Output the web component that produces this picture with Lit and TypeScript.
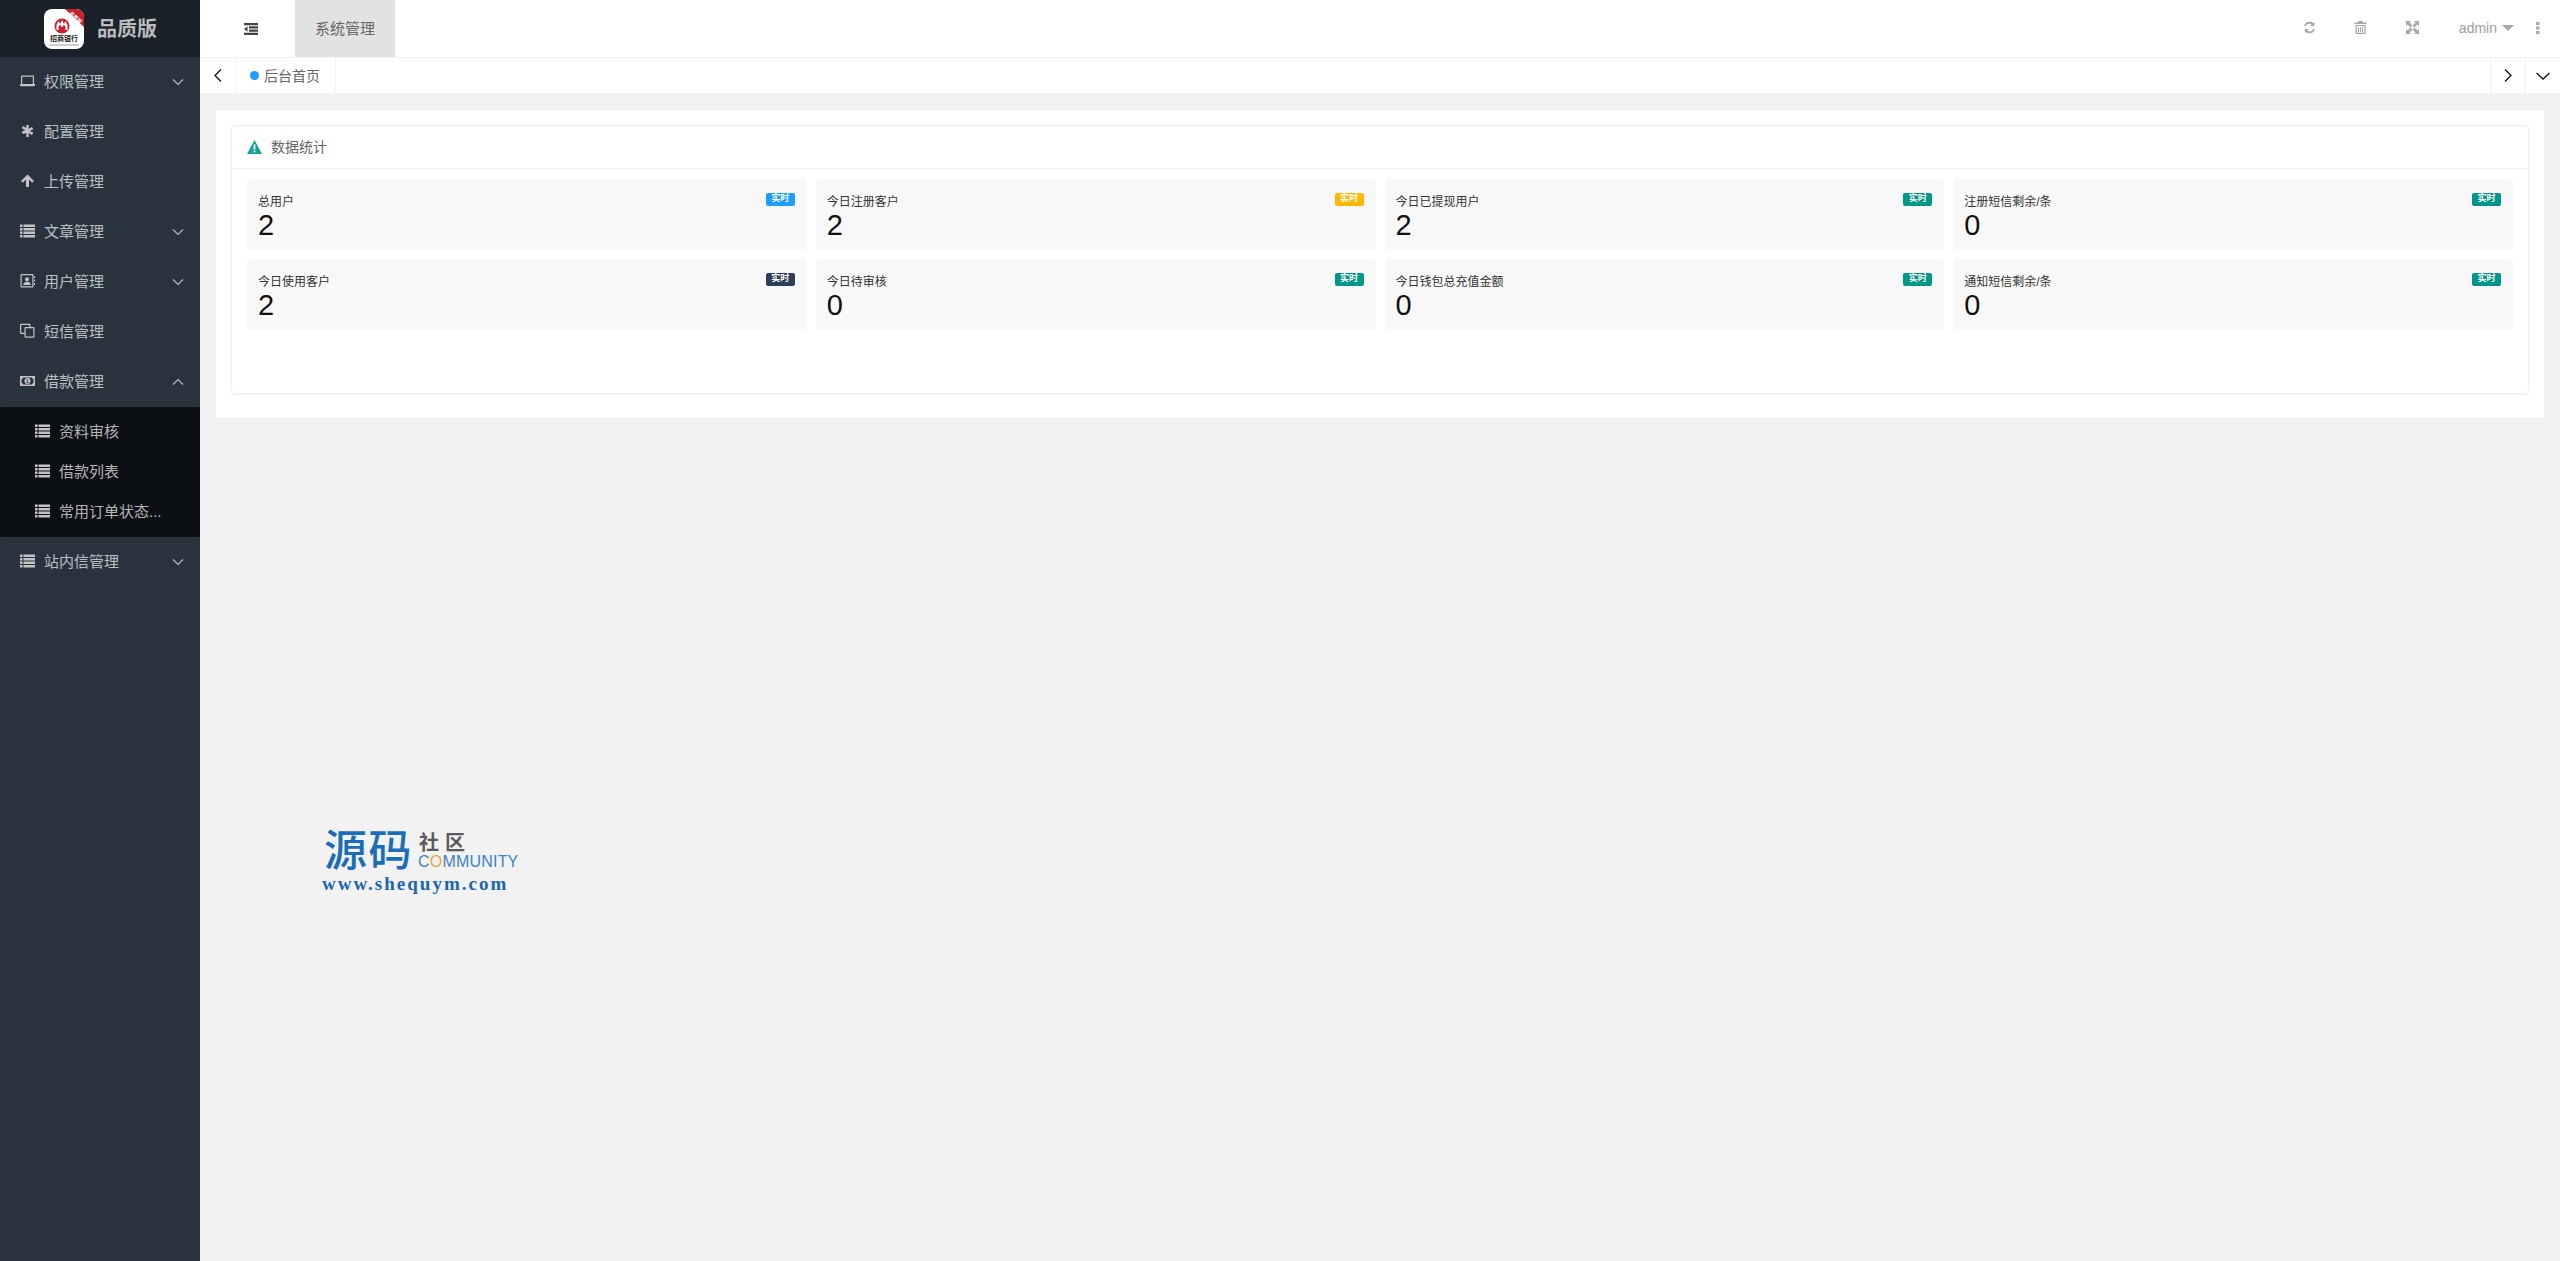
import { LitElement, html, css, svg } from "lit";
import { customElement } from "lit/decorators.js";

const listIcon = svg`<path d="M0 1.500h2.500v2.400H0zM3.500 1.500H15v2.400H3.500zM0 5h2.500v2.400H0zM3.500 5H15v2.400H3.500zM0 8.500h2.500v2.400H0zM3.500 8.500H15v2.400H3.500zM0 12h2.500v2.400H0zM3.500 12H15v2.400H3.500z"/>`;
const icons: Record<string, any> = {
  laptop: svg`<path fill-rule="evenodd" d="M2 2.500h11a1 1 0 0 1 1 1v7.500h1v1.500a.8.8 0 0 1-.8.8H.8a.8.8 0 0 1-.8-.8V11h1V3.500a1 1 0 0 1 1-1zM2.200 3.700V11h10.600V3.700z"/>`,
  asterisk: svg`<path d="M6.200 1.500h2.600l-.2 4 3.400-2.200 1.300 2.300-3.600 1.800 3.600 1.800-1.300 2.300-3.400-2.200.2 4H6.200l.2-4L3 10.500 1.700 8.200 5.300 6.400 1.700 4.600 3 2.300l3.400 2.200z" transform="translate(0 .6)"/>`,
  up: svg`<path d="M7.500 1.500 14 8l-1.700 1.700-3.300-3.300V14H6V6.400L2.700 9.700 1 8z"/>`,
  list: listIcon,
  book: svg`<path fill-rule="evenodd" d="M1.500 1h11a1 1 0 0 1 1 1v11.500a1 1 0 0 1-1 1h-11a1 1 0 0 1-1-1V2a1 1 0 0 1 1-1zM1.700 2.200v11.100h10.600V2.200zM7 4.200a2 2 0 1 1 0 4 2 2 0 0 1 0-4zM3.300 12c0-2 1.300-3.300 3.700-3.300s3.700 1.300 3.700 3.300zM14 3h1v2h-1zM14 6.500h1v2h-1zM14 10h1v2h-1z"/>`,
  clone: svg`<path fill-rule="evenodd" d="M1 .8h8.500a1 1 0 0 1 1 1V4h3a1 1 0 0 1 1 1v8.800a1 1 0 0 1-1 1H5.500a1 1 0 0 1-1-1V11H1a1 1 0 0 1-1-1V1.800a1 1 0 0 1 1-1zM1.200 2v7.800h3.300V5a1 1 0 0 1 1-1h3.800V2zM5.700 5.200v8.400h7.600V5.200z"/>`,
  money: svg`<path fill-rule="evenodd" d="M0 3h15v10H0zM2.800 4.500c0 1-.6 1.500-1.300 1.500v4c.8 0 1.300.6 1.300 1.500h9.400c0-.9.500-1.500 1.300-1.500V6c-.8 0-1.300-.5-1.300-1.500zM7.500 5a3 3 0 1 1 0 6 3 3 0 0 1 0-6zM6.700 6.500v.7h.5v2H6.600v.8h2v-.8H8V6.500z"/>`,
};

const menu = [
  { icon: "laptop", text: "权限管理", arrow: "down" },
  { icon: "asterisk", text: "配置管理" },
  { icon: "up", text: "上传管理" },
  { icon: "list", text: "文章管理", arrow: "down" },
  { icon: "book", text: "用户管理", arrow: "down" },
  { icon: "clone", text: "短信管理" },
  { icon: "money", text: "借款管理", arrow: "up", sub: ["资料审核", "借款列表", "常用订单状态..."] },
  { icon: "list", text: "站内信管理", arrow: "down" },
];

const stats = [
  ["总用户", "2", "blue"],
  ["今日注册客户", "2", "orange"],
  ["今日已提现用户", "2", "green"],
  ["注册短信剩余/条", "0", "green"],
  ["今日使用客户", "2", "navy"],
  ["今日待审核", "0", "green"],
  ["今日钱包总充值金额", "0", "green"],
  ["通知短信剩余/条", "0", "green"],
];

@customElement("app-root")
export class AppRoot extends LitElement {
  static styles = css`
    :host { display: flex; height: 1261px; background: #f2f2f2; position: relative; overflow: hidden;
      font-family: "Liberation Sans", "Noto Sans CJK SC", sans-serif; }
    .side { width: 200px; flex: none; background: #28333e; color: rgba(255,255,255,.7); font-size: 15px; }
    .brand { height: 57px; background: #1a2129; display: flex; align-items: center; padding-left: 44px; gap: 13px; box-sizing: border-box; }
    .logo { width: 40px; height: 40px; display: block; }
    .brand b { font-size: 20px; color: #b9bbbd; font-weight: 700; margin-top: -2px; }
    .item { height: 50px; display: flex; align-items: center; padding-left: 20px; position: relative; }
    .item span, .subitem span { margin-top: -3px; }
    .ic { width: 15px; height: 15px; fill: #c4c4c4; flex: none; margin: -3px 9px 0 0; display: block; }
    .arrow { position: absolute; left: 172px; top: 21px; width: 12px; height: 8px; fill: none; stroke: #b4b8bc; stroke-width: 1.200; }
    .sub { background: #0c0f13; padding: 5px 0; border-radius: 2px; }
    .subitem { height: 40px; display: flex; align-items: center; padding-left: 35px; font-size: 15px; }
    .main { flex: 1; min-width: 0; display: flex; flex-direction: column; }
    .top { height: 57px; background: #fff; display: flex; align-items: stretch; box-sizing: content-box; border-bottom: 1px solid #f2f2f2; }
    .fold { width: 95px; display: flex; align-items: center; padding-left: 44px; box-sizing: border-box; }
    .fold svg { width: 14px; height: 12px; fill: #444; }
    .topt { width: 100px; background: #e2e2e2; display: flex; align-items: center; justify-content: center; color: #666; font-size: 15px; padding-bottom: 2px; box-sizing: border-box; }
    .tools { margin-left: auto; display: flex; align-items: center; color: #999; padding-bottom: 2px; }
    .tools svg { fill: #a8a8a8; display: block; }
    .tool { width: 13px; height: 13px; }
    .t1 { margin-right: 38px; }
    .t2 { margin-right: 39px; }
    .t3 { margin-right: 40px; }
    .admin { font-size: 14px; color: #a0a0a0; }
    .caret { width: 12px; height: 6px; margin-left: 5px; margin-right: 22px; }
    .dots { width: 4px; height: 12px; margin-right: 20px; }
    .tabs { height: 35px; background: #fff; display: flex; align-items: stretch; color: #666; font-size: 14px; }
    .nav { width: 36px; display: flex; align-items: center; justify-content: center; box-sizing: border-box; }
    .nav svg { fill: none; stroke: #111; stroke-width: 1.300; display: block; }
    .nav.l { border-right: 1px solid #f2f2f2; }
    .nav.r { border-left: 1px solid #f2f2f2; width: 35px; }
    .tab { width: 100px; display: flex; align-items: center; box-sizing: border-box; padding-left: 14px; border-right: 1px solid #f2f2f2; }
    .tab b { font-weight: 400; margin-top: -2px; }
    .dot { width: 9px; height: 9px; border-radius: 50%; background: #1e9fff; margin-right: 5px; }
    .spacer { flex: 1; }
    .content { padding: 17px 16px; }
    .panel { background: #fff; border-radius: 4px; padding: 15px 15px 24px; }
    .card { border: 1px solid #f0f0f0; border-radius: 4px; box-shadow: 0 1px 2px rgba(0,0,0,.04); height: 269px; box-sizing: border-box; }
    .head { height: 43px; box-sizing: border-box; border-bottom: 1px solid #f2f2f2; display: flex; align-items: center; padding-left: 15px; color: #666; font-size: 14px; }
    .head span { margin-top: -2px; }
    .warn { width: 15px; height: 14px; fill: #16a394; margin-right: 9px; }
    .grid { display: grid; grid-template-columns: repeat(4, 1fr); gap: 9px; padding: 10px 15px; }
    .stat { height: 71px; background: #f8f8f8; border-radius: 4px; box-shadow: 0 1px 1px rgba(0,0,0,.02); position: relative; padding: 16px 11px 0; box-sizing: border-box; color: #111; }
    .label { font-size: 12px; line-height: 14px; color: #333; }
    .num { font-size: 29px; line-height: 32px; color: #111; }
    .badge { position: absolute; right: 12px; top: 14px; width: 29px; height: 13px; border-radius: 2px; color: #fff; font-size: 9px; font-weight: 700; line-height: 10px; text-align: center; overflow: hidden; }
    .blue { background: #1e9fff; }
    .orange { background: #ffb800; }
    .green { background: #009688; }
    .navy { background: #2f4056; }
    .mark { position: absolute; left: 322px; top: 822px; width: 200px; height: 74px; }
    .m1 { position: absolute; left: 2px; top: 5px; font-size: 43px; line-height: 40px; color: #1b6db8; font-family: "Noto Sans CJK SC", sans-serif; letter-spacing: 1.500px; font-weight: 500; }
    .m2 { position: absolute; left: 97px; top: 8px; font-size: 20px; line-height: 24px; color: #5a5a5a; font-weight: 700; letter-spacing: 6px; font-family: "Noto Sans CJK SC", sans-serif; }
    .m3 { position: absolute; left: 96px; top: 31px; font-size: 16px; line-height: 17px; color: #3f83c6; letter-spacing: .2px; }
    .m3 i { font-style: normal; color: #e8a838; }
    .m4 { position: absolute; left: 0; top: 52px; font-family: "Liberation Serif", serif; font-weight: 700; font-size: 19px; line-height: 20px; color: #1b67ae; letter-spacing: 2px; white-space: nowrap; }
  `;

  private renderMenu() {
    return menu.map((m) => html`
      <div class="item">
        <svg class="ic" viewBox="0 0 15 15">${icons[m.icon]}</svg>
        <span>${m.text}</span>
        ${m.arrow
          ? html`<svg class="arrow" viewBox="0 0 12 8"><path d=${m.arrow === "down" ? "M1 1.500l5 5 5-5" : "M1 6.500l5-5 5 5"}/></svg>`
          : ""}
      </div>
      ${m.sub
        ? html`<div class="sub">
            ${m.sub.map((s) => html`<div class="subitem"><svg class="ic" viewBox="0 0 15 15">${listIcon}</svg><span>${s}</span></div>`)}
          </div>`
        : ""}
    `);
  }

  render() {
    return html`
      <aside class="side">
        <div class="brand">
          <svg class="logo" viewBox="0 0 40 40">
            <rect width="40" height="40" rx="8" fill="#fff"/>
            <path d="M21 0h11a8 8 0 0 1 8 8v10z" fill="#c8202d"/>
            <text x="31" y="10" font-size="5" fill="#fff" font-weight="700" text-anchor="middle" transform="rotate(42 31 9)" font-family="Noto Sans CJK SC">品质版</text>
            <circle cx="18" cy="17" r="7.500" fill="#c8202d"/>
            <path d="M12.500 21v-5l2-4 1.500 3 2-4 2 4 1.500-3 2 4v5h-2v-3l-1.500-2.500-2 3-2-3-1.500 2.500v3z" fill="#fff"/>
            <text x="20" y="32" font-size="7" font-weight="700" fill="#222" text-anchor="middle" font-family="Noto Sans CJK SC">招商银行</text>
            <path d="M5 36h30" stroke="#888" stroke-width=".8"/>
          </svg>
          <b>品质版</b>
        </div>
        ${this.renderMenu()}
      </aside>
      <div class="main">
        <div class="top">
          <div class="fold"><svg viewBox="0 0 14 12"><path d="M0 0h14v2.200H0zM5 3.300h9v2.200H5zM5 6.600h9v2.200H5zM0 9.800h14V12H0zM3.500 3.300v5.400L0 6z"/></svg></div>
          <div class="topt">系统管理</div>
          <div class="tools">
            <svg class="tool t1" viewBox="0 0 13 13"><path d="M11.200 1.200v3.900H7.300l1.500-1.500A3.700 3.700 0 0 0 2.900 5H1.100a5.500 5.500 0 0 1 9-2.900zM1.800 11.800V7.900h3.900L4.200 9.400A3.700 3.700 0 0 0 10.100 8h1.800a5.500 5.500 0 0 1-9 2.900z"/></svg>
            <svg class="tool t2" viewBox="0 0 13 13"><path fill-rule="evenodd" d="M4.500 0h4l.8 1.500H12.500v1.500H.5V1.500h3.200zM1.500 4h10v8a1 1 0 0 1-1 1h-8a1 1 0 0 1-1-1zM2.800 5v6.800h7.400V5zM4 6h1v5H4zM6 6h1v5H6zM8 6h1v5H8z"/></svg>
            <svg class="tool t3" viewBox="0 0 13 13"><path d="M0 0h5L3.500 1.500 6.500 4.500 4.500 6.500 1.500 3.500 0 5zM13 0v5L11.500 3.500 8.500 6.500 6.500 4.500 9.500 1.500 8 0zM0 13V8l1.500 1.500 3-3 2 2-3 3L5 13zM13 13H8l1.500-1.500-3-3 2-2 3 3L13 8z"/></svg>
            <span class="admin">admin</span>
            <svg class="caret" viewBox="0 0 12 6"><path d="M0 0h12L6 6z"/></svg>
            <svg class="dots" viewBox="0 0 4 12"><path d="M0 0h3.500v3H0zM0 4.500h3.500v3H0zM0 9h3.500v3H0z"/></svg>
          </div>
        </div>
        <div class="tabs">
          <div class="nav l"><svg width="8" height="13" viewBox="0 0 8 13"><path d="M7 .5 1 6.500l6 6"/></svg></div>
          <div class="tab"><span class="dot"></span><b>后台首页</b></div>
          <div class="spacer"></div>
          <div class="nav r"><svg width="8" height="13" viewBox="0 0 8 13"><path d="M1 .5l6 6-6 6"/></svg></div>
          <div class="nav r"><svg width="14" height="8" viewBox="0 0 14 8"><path d="M.5 1 7 7l6.500-6"/></svg></div>
        </div>
        <div class="content">
          <div class="panel">
            <div class="card">
              <div class="head">
                <svg class="warn" viewBox="0 0 15 14"><path fill-rule="evenodd" d="M7.500 0 15 14H0zM6.600 4.500v5h1.800v-5zM6.600 10.500v1.800h1.800v-1.800z"/></svg>
                <span>数据统计</span>
              </div>
              <div class="grid">
                ${stats.map(([l, n, c]) => html`
                  <div class="stat">
                    <div class="label">${l}</div>
                    <div class="num">${n}</div>
                    <span class="badge ${c}">实时</span>
                  </div>`)}
              </div>
            </div>
          </div>
        </div>
      </div>
      <div class="mark">
        <div class="m1">源码</div>
        <div class="m2">社区</div>
        <div class="m3">C<i>O</i>MMUNITY</div>
        <div class="m4">www.shequym.com</div>
      </div>
    `;
  }
}
